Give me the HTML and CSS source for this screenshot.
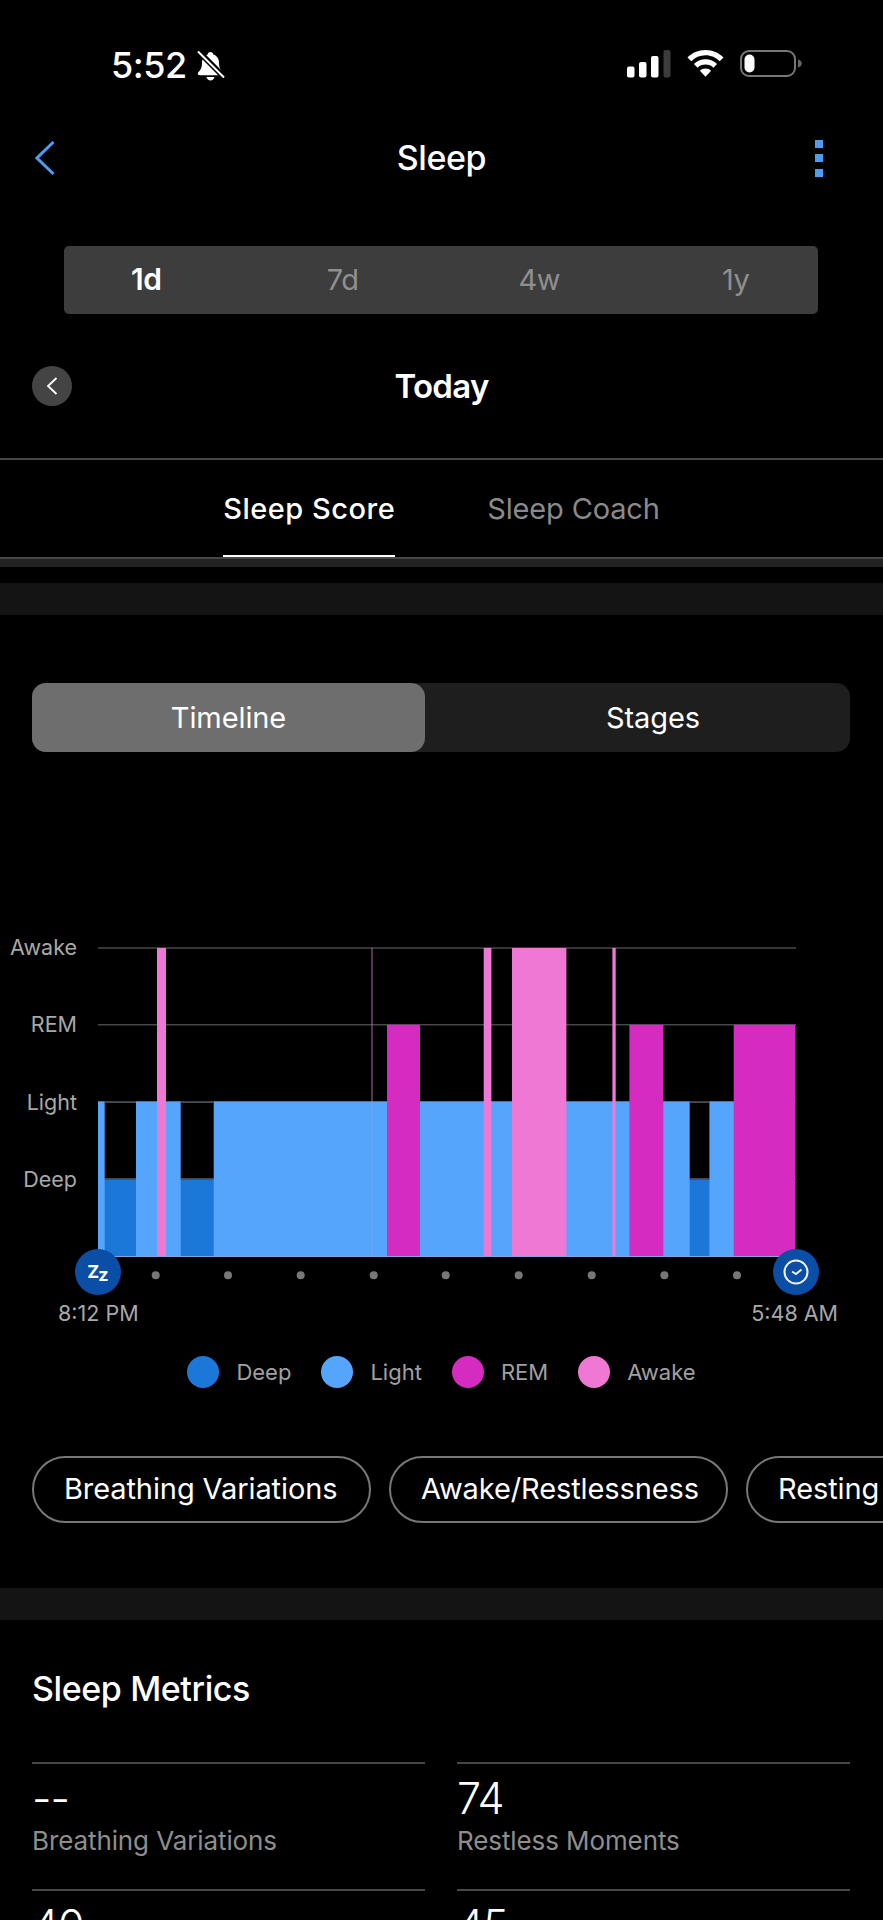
FILE: index.html
```html
<!DOCTYPE html>
<html lang="en">
<head>
<meta charset="utf-8">
<title>Sleep</title>
<link rel="stylesheet" href="styles.css">
</head>
<body>
<div class="screen">
  <div class="status">
    <div class="status-left">
      <span class="clock">5:52</span>
      <svg class="bell" viewBox="0 0 29 32" width="29" height="32"><path d="M14.500 2c-1.600 0-2.700 1.100-2.800 2.600C7.800 5.800 6 9 6 13c0 4.500-1.200 6.800-3.400 9-.6.6-.8 1-.8 1.600 0 1 .8 1.600 1.900 1.600h21.600c1.100 0 1.900-.6 1.900-1.600 0-.6-.2-1-.8-1.600-2.200-2.200-3.400-4.500-3.400-9 0-4-1.800-7.200-5.700-8.400C17.200 3.100 16.100 2 14.500 2zM10.500 27c.3 2 2 3.400 4 3.400s3.700-1.400 4-3.400z" fill="#fff"/><path d="M3.500 0.500l26 26" stroke="#000" stroke-width="3"/><path d="M1 2l26 26" stroke="#000" stroke-width="3"/><path d="M2 1.500l26 26" stroke="#fff" stroke-width="2"/></svg>
    </div>
    <div class="status-right">
      <svg viewBox="0 0 44 28" width="44" height="28"><rect x="0" y="16.500" width="7.500" height="11" rx="2" fill="#fff"/><rect x="12" y="12" width="7.500" height="15.500" rx="2" fill="#fff"/><rect x="24" y="6" width="7.500" height="21.500" rx="2" fill="#fff"/><rect x="36.500" y="0" width="7" height="27.500" rx="2" fill="#3c3c3c"/></svg>
      <svg viewBox="0 0 37 27" width="37" height="27"><path d="M18.500 0C11.300 0 5 2.900.5 7.500l3.800 3.700C8 7.500 13 5.200 18.500 5.200s10.500 2.300 14.200 6l3.800-3.700C32 2.900 25.700 0 18.500 0z" fill="#fff"/><path d="M18.500 9.300c-4.600 0-8.600 1.800-11.600 4.800l3.700 3.700c2-2 4.800-3.200 7.900-3.200s5.900 1.200 7.900 3.200l3.700-3.700c-3-3-7-4.800-11.600-4.800z" fill="#fff"/><path d="M18.500 18.500c-2.300 0-4.200.9-5.600 2.300l5.600 6 5.600-6c-1.400-1.400-3.300-2.300-5.600-2.300z" fill="#fff"/></svg>
      <svg viewBox="0 0 62 27" width="62" height="27"><rect x="1" y="1" width="54" height="25" rx="8" fill="none" stroke="#777" stroke-width="2"/><rect x="4.500" y="4.500" width="10" height="18" rx="5" fill="#fff"/><path d="M58 9.500c2.200.5 3.800 2 3.800 4s-1.600 3.500-3.800 4z" fill="#666"/></svg>
    </div>
  </div>

  <div class="nav">
    <svg viewBox="0 0 20 34" width="20" height="34"><path d="M18.500 1L2 17l16.500 16" fill="none" stroke="#4c9df0" stroke-width="3"/></svg>
    <h1 class="title">Sleep</h1>
    <div class="kebab"><i></i><i></i><i></i></div>
  </div>

  <div class="range">
    <span class="range-item is-active">1d</span>
    <span class="range-item">7d</span>
    <span class="range-item">4w</span>
    <span class="range-item">1y</span>
  </div>

  <div class="date-row">
    <div class="date-back"><svg viewBox="0 0 12 18" width="12" height="18"><path d="M10.500 1L2 9l8.500 8" fill="none" stroke="#fff" stroke-width="1.800"/></svg></div>
    <h2 class="date">Today</h2>
  </div>

  <div class="tabs">
    <span class="tab is-active">Sleep Score</span>
    <span class="tab">Sleep Coach</span>
  </div>
  <div class="tabs-shadow"></div>
  <div class="band band-top"></div>

  <div class="toggle">
    <span class="toggle-item is-active">Timeline</span>
    <span class="toggle-item toggle-item-second">Stages</span>
  </div>

  <div class="chart">
    <div class="y-labels">
      <span>Awake</span>
      <span>REM</span>
      <span>Light</span>
      <span>Deep</span>
    </div>
    <svg class="plot" viewBox="0 0 785 340" width="785" height="340">
      <g fill="none" stroke="#474747" stroke-width="1.500">
        <path d="M0 3H698"/><path d="M0 79.700H698"/><path d="M0 156.700H698"/><path d="M0 234H698"/>
      </g>
      <g fill="#55a5fd">
        <rect x="0" y="156.500" width="697" height="155"/>
      </g>
      <g fill="#000">
        <rect x="6.700" y="156.500" width="31.300" height="77"/>
        <rect x="82.700" y="156.500" width="33" height="77"/>
        <rect x="591.700" y="156.500" width="19.700" height="77"/>
      </g>
      <g fill="#1c78d8">
        <rect x="6.700" y="234" width="31.300" height="77.500"/>
        <rect x="82.700" y="234" width="33" height="77.500"/>
        <rect x="591.700" y="234" width="19.700" height="77.500"/>
      </g>
      <g fill="none" stroke="#4a4a4a" stroke-width="1.500">
        <path d="M6.700 157.200H38M6.700 234H38"/>
        <path d="M82.700 157.200H115.700M82.700 234H115.700"/>
        <path d="M591.700 157.200H611.400M591.700 234H611.400"/>
      </g>
      <g fill="#d52bc0">
        <rect x="289" y="79.700" width="33" height="231.800"/>
        <rect x="531.400" y="79.700" width="34" height="231.800"/>
        <rect x="635.700" y="79.700" width="61.300" height="231.800"/>
      </g>
      <g fill="#f078d5">
        <rect x="59" y="3" width="9" height="308.500"/>
        <rect x="385.700" y="3" width="7.700" height="308.500"/>
        <rect x="414" y="3" width="54.400" height="308.500"/>
        <rect x="514.400" y="3" width="3.300" height="308.500"/>
      </g>
      <rect x="273.500" y="3" width="1" height="153.500" fill="#a8689f"/>
      <rect x="273.500" y="156.500" width="1" height="155" fill="#78a4ea"/>
      <path d="M0 311.500H697" stroke="#7fa8d8" stroke-width="1"/>
      <g fill="#777">
        <circle cx="57.700" cy="330.300" r="4"/><circle cx="130" cy="330.300" r="4"/><circle cx="202.700" cy="330.300" r="4"/>
        <circle cx="275.700" cy="330.300" r="4"/><circle cx="347.700" cy="330.300" r="4"/><circle cx="420.700" cy="330.300" r="4"/>
        <circle cx="493.700" cy="330.300" r="4"/><circle cx="566.400" cy="330.300" r="4"/><circle cx="639" cy="330.300" r="4"/>
      </g>
    </svg>
    <div class="badge badge-start"><span class="zz">Z</span><span class="zz zz-small">z</span></div>
    <div class="badge badge-end"><svg viewBox="0 0 26 26" width="26" height="26"><circle cx="13" cy="13" r="11.500" fill="none" stroke="#f2f2f2" stroke-width="2"/><path d="M9 12.500l4 2.500 5.500-4.500" fill="none" stroke="#f2f2f2" stroke-width="2"/></svg></div>
  </div>

  <div class="times">
    <span>8:12 PM</span>
    <span>5:48 AM</span>
  </div>

  <div class="legend">
    <div class="legend-item"><i class="swatch swatch-deep"></i>Deep</div>
    <div class="legend-item"><i class="swatch swatch-light"></i>Light</div>
    <div class="legend-item"><i class="swatch swatch-rem"></i>REM</div>
    <div class="legend-item"><i class="swatch swatch-awake"></i>Awake</div>
  </div>

  <div class="chips">
    <span class="chip">Breathing Variations</span>
    <span class="chip">Awake/Restlessness</span>
    <span class="chip">Resting Heart Rate</span>
  </div>

  <div class="band band-mid"></div>

  <h3 class="section-title">Sleep Metrics</h3>

  <div class="metrics">
    <div class="metric"><div class="metric-value">--</div><div class="metric-label">Breathing Variations</div></div>
    <div class="metric"><div class="metric-value">74</div><div class="metric-label">Restless Moments</div></div>
    <div class="metric"><div class="metric-value">40<small class="unit">bpm</small></div><div class="metric-label">Lowest Respiration</div></div>
    <div class="metric"><div class="metric-value">45<small class="unit">bpm</small></div><div class="metric-label">Resting Heart Rate</div></div>
  </div>
</div>
</body>
</html>
```

FILE: styles.css
```css
* { box-sizing: border-box; }
html, body { margin: 0; padding: 0; background: #000; }
body { font-family: Inter, "Liberation Sans", sans-serif; color: #fff; }
h1, h2, h3 { margin: 0; }

.screen { width: 883px; height: 1920px; overflow: hidden; background: #000; }

.status { display: flex; justify-content: space-between; height: 82px; padding: 50px 81px 0 111px; }
.status-left { display: flex; gap: 9px; align-items: flex-start; }
.clock { font-size: 36px; line-height: 30px; font-weight: 500; letter-spacing: -0.5px; }
.status-right { display: flex; gap: 16px; align-items: flex-start; }

.nav { display: grid; grid-template-columns: 1fr auto 1fr; align-items: center; height: 40px; margin-top: 55px; padding: 0 35px; }
.title { font-size: 34px; font-weight: 500; line-height: 42px; letter-spacing: -0.4px; }
.kebab { display: flex; flex-direction: column; gap: 6.500px; justify-self: end; margin-right: 25px; }
.kebab i { width: 8px; height: 8px; background: #4c9df0; }

.range { display: grid; grid-template-columns: repeat(4, 196.500px); justify-content: center; align-items: center; height: 68px; padding-bottom: 2px; margin: 69px 65px 0 64px; background: #3d3d3d; border-radius: 5px; }
.range-item { font-size: 29px; text-align: center; color: #8f8f8f; letter-spacing: -0.4px; }
.range-item.is-active { color: #fff; font-weight: 600; font-size: 30px; }

.date-row { position: relative; display: flex; justify-content: center; align-items: center; height: 40px; margin-top: 52px; }
.date-back { position: absolute; left: 32px; top: 0; display: flex; align-items: center; justify-content: center; width: 40px; height: 40px; border-radius: 50%; background: #444; }
.date { font-size: 33px; font-weight: 600; letter-spacing: -0.7px; }

.tabs { display: flex; justify-content: center; gap: 92px; height: 101px; margin-top: 52px; border-top: 2px solid #484848; border-bottom: 2px solid #484848; }
.tab { font-size: 29px; line-height: 35px; padding-top: 31px; height: 97px; color: #8a8a8a; letter-spacing: -0.15px; }
.tab.is-active { color: #fff; font-weight: 500; letter-spacing: 0.5px; border-bottom: 2px solid #fff; }
.tabs-shadow { height: 8px; background: #222; }

.band { background: #141414; height: 32px; }
.band-top { margin-top: 16px; }

.toggle { display: grid; grid-template-columns: 393px 1fr; height: 69px; margin: 68px 33px 0 32px; background: #1e1e1e; border-radius: 14px; }
.toggle-item { display: flex; align-items: center; justify-content: center; font-size: 29px; letter-spacing: -0.1px; color: #fff; }
.toggle-item-second { padding-left: 31px; }
.toggle-item.is-active { background: #6e6e6e; border-radius: 14px; }

.chart { position: relative; display: flex; margin-top: 193px; height: 340px; }
.y-labels { display: flex; flex-direction: column; align-items: flex-end; width: 98px; margin-top: -10px; padding: 0 21px 0 0; color: #a8a8a8; font-size: 21.500px; }
.y-labels span { height: 77.300px; line-height: 24px; }
.plot { display: block; }
.badge { position: absolute; top: 304px; width: 46px; height: 46px; border-radius: 50%; background: #0a4ea6; display: flex; align-items: center; justify-content: center; }
.badge-start { left: 75px; }
.badge-end { left: 773px; }
.zz { font-size: 18px; font-weight: 700; line-height: 1; }
.zz-small { margin-top: 5px; margin-left: -1px; }

.times { display: flex; justify-content: space-between; margin-top: 16px; padding: 0 45px 0 58px; font-size: 21.500px; line-height: 24px; color: #a8a8a8; }

.legend { display: flex; gap: 30px; justify-content: center; margin-top: 31px; font-size: 22px; color: #a0a0a0; }
.legend-item { display: flex; align-items: center; gap: 17px; height: 32px; }
.swatch { width: 32px; height: 32px; border-radius: 50%; }
.swatch-deep { background: #1c78d8; }
.swatch-light { background: #55a5fd; }
.swatch-rem { background: #d52bc0; }
.swatch-awake { background: #f078d5; }

.chips { display: flex; gap: 18px; margin-top: 68px; padding-left: 32px; white-space: nowrap; }
.chip { flex: none; width: 339px; height: 67px; line-height: 61px; padding: 0 30px; border: 2px solid #777; border-radius: 34px; font-size: 29px; letter-spacing: -0.1px; }

.band-mid { margin-top: 65px; }

.section-title { font-size: 34px; font-weight: 500; line-height: 40px; margin: 49px 0 0 32px; letter-spacing: -0.4px; }

.metrics { display: grid; grid-template-columns: 393px 393px; column-gap: 32px; margin: 53px 0 0 32px; }
.metric { height: 127px; border-top: 2px solid #474747; padding-top: 10px; }
.metric-value { font-size: 43px; line-height: 48px; font-weight: 300; letter-spacing: -1px; }
.unit { font-size: 28px; margin-left: 9px; }
.metric-label { font-size: 26px; line-height: 32px; color: #8e8e8e; margin-top: 3px; letter-spacing: -0.1px; }
```
